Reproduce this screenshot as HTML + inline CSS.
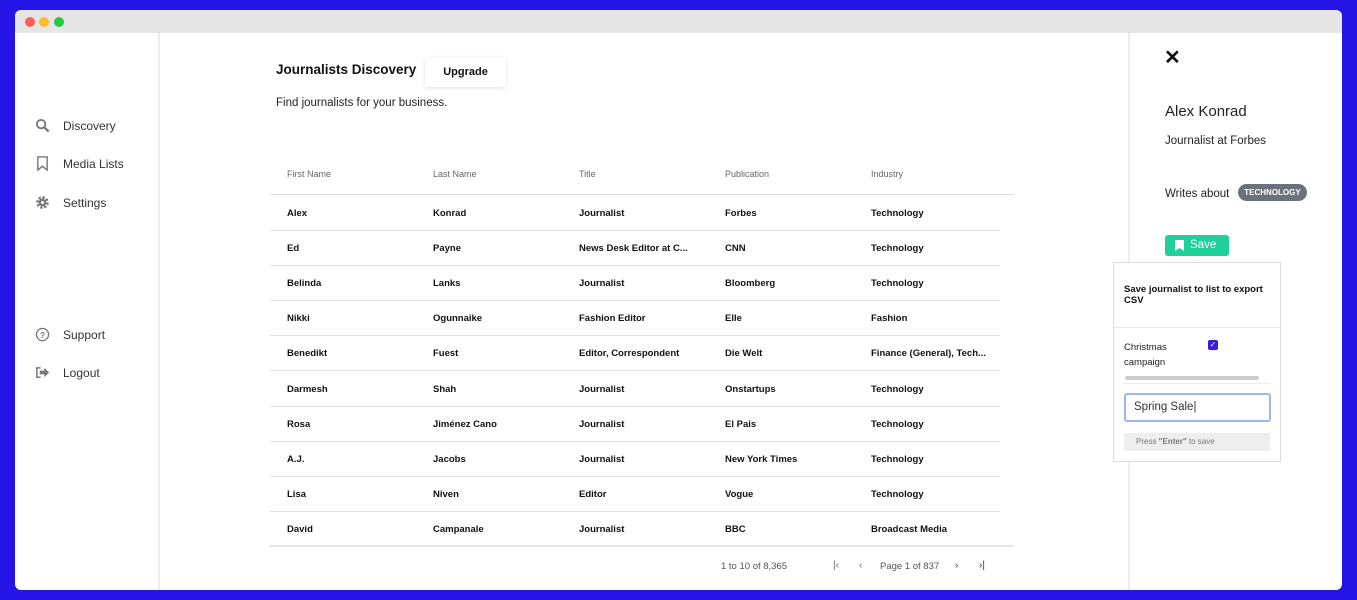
<!DOCTYPE html>
<html><head><meta charset="utf-8"><style>
*{box-sizing:border-box;margin:0;padding:0}
body{width:1357px;height:600px;background:#2414e6;font-family:"Liberation Sans",sans-serif;position:relative;overflow:hidden;color:#111}
.win{position:absolute;left:15px;top:10px;width:1327px;height:580px;background:#fff;border-radius:6px;overflow:hidden}
.bar{height:23px;background:#e6e6e6;position:relative}
.dot{position:absolute;top:7px;width:10px;height:10px;border-radius:50%}
.side{position:absolute;left:0;top:23px;width:145px;bottom:0;border-right:2px solid #eee}
.nav{position:absolute;left:20px;font-size:12px;color:#333;display:flex;align-items:center}
.nav svg{margin-right:13px}
.a{position:absolute}
.th{font-size:9px;color:#666}
.td{font-size:9.5px;font-weight:bold;color:#111}
.ln{position:absolute;left:255px;width:730px;height:1px;background:#e3e3e3}
.rp{position:absolute;left:1113px;top:23px;bottom:0;border-left:2px solid #eee}
</style></head><body>
<div class="win">
<div class="bar"><div class="dot" style="left:10px;background:#fe5f57"></div><div class="dot" style="left:24px;background:#febc2e"></div><div class="dot" style="left:39px;background:#28c840"></div></div>
<div class="side">
<div class="nav" style="top:85px"><svg width="15" height="15" viewBox="0 0 16 16"><circle cx="6.5" cy="6.5" r="4.5" fill="none" stroke="#777" stroke-width="2"/><path d="M10 10l4.5 4.5" stroke="#777" stroke-width="2.4"/></svg>Discovery</div>
<div class="nav" style="top:123px"><svg width="15" height="15" viewBox="0 0 16 16"><path d="M3 1h10v14l-5-4-5 4z" fill="none" stroke="#777" stroke-width="1.5"/></svg>Media Lists</div>
<div class="nav" style="top:162px"><svg width="15" height="15" viewBox="0 0 16 16"><circle cx="8" cy="8" r="5" fill="none" stroke="#777" stroke-width="3.5" stroke-dasharray="2.2 1.7"/><circle cx="8" cy="8" r="4" fill="#777"/><circle cx="8" cy="8" r="1.6" fill="#fff"/></svg>Settings</div>
<div class="nav" style="top:294px"><svg width="15" height="15" viewBox="0 0 16 16"><circle cx="8" cy="8" r="6.5" fill="none" stroke="#777" stroke-width="1.4"/><text x="8" y="11.5" font-size="9" text-anchor="middle" fill="#777" font-family="Liberation Sans" font-weight="bold">?</text></svg>Support</div>
<div class="nav" style="top:332px"><svg width="15" height="15" viewBox="0 0 16 16"><path d="M6 3H2v10h4" fill="none" stroke="#777" stroke-width="1.6"/><path d="M5 6h5V3l5 5-5 5v-3H5z" fill="#777"/></svg>Logout</div>
</div>
<div class="a" style="left:261px;top:52px;font-size:13.5px;font-weight:bold;color:#111">Journalists Discovery</div>
<div class="a" style="left:410px;top:47px;width:81px;height:30px;box-shadow:0 1px 4px rgba(0,0,0,.12);font-size:11px;font-weight:bold;text-align:center;line-height:30px">Upgrade</div>
<div class="a" style="left:261px;top:87px;font-size:11.5px;color:#222">Find journalists for your business.</div>
<div class="ln" style="top:184px;width:744px;height:1px;background:#ddd"></div>
<div class="a th" style="left:272px;top:159px">First Name</div>
<div class="a th" style="left:418px;top:159px">Last Name</div>
<div class="a th" style="left:564px;top:159px">Title</div>
<div class="a th" style="left:710px;top:159px">Publication</div>
<div class="a th" style="left:856px;top:159px">Industry</div>
<div id="rows"></div>
<div class="ln" style="top:535px;width:744px;height:2px;background:#e6e6e6"></div>
<div class="a" style="left:706px;top:551px;font-size:9.5px;color:#555">1 to 10 of 8,365</div>
<div class="a" style="left:818px;top:550px;font-size:10px;color:#666">|&lsaquo;</div>
<div class="a" style="left:844px;top:550px;font-size:10px;color:#666">&lsaquo;</div>
<div class="a" style="left:865px;top:551px;font-size:9.5px;color:#555">Page 1 of 837</div>
<div class="a" style="left:940px;top:550px;font-size:10px;color:#333">&rsaquo;</div>
<div class="a" style="left:964px;top:550px;font-size:10px;color:#333">&rsaquo;|</div>
<div class="rp"></div>
<div class="a" style="left:1149px;top:35px;font-size:20px;font-weight:bold;color:#111">✕</div>
<div class="a" style="left:1150px;top:93px;font-size:15px;color:#222">Alex Konrad</div>
<div class="a" style="left:1150px;top:125px;font-size:11.5px;color:#222">Journalist at Forbes</div>
<div class="a" style="left:1150px;top:178px;font-size:11.5px;color:#222">Writes about</div>
<div class="a" style="left:1223px;top:174px;width:69px;height:17px;border-radius:9px;background:#6c727c;color:#fff;font-size:8px;font-weight:bold;text-align:center;line-height:17px">TECHNOLOGY</div>
<div class="a" style="left:1150px;top:225px;width:64px;height:21px;border-radius:3px;background:#1ed09a;color:#fff;font-size:11.5px;line-height:21px;padding-left:25px">Save<svg style="position:absolute;left:10px;top:5px" width="9" height="11" viewBox="0 0 9 11"><path d="M0 0h9v11L4.5 8 0 11z" fill="#fff"/></svg></div>
<div class="a" style="left:1098px;top:252px;width:168px;height:200px;border:1px solid #ddd;background:#fff">
<div style="position:absolute;left:10px;top:21px;font-size:9.5px;font-weight:bold;line-height:11px;width:150px">Save journalist to list to export CSV</div>
<div style="position:absolute;left:0;right:0;top:64px;height:1px;background:#e6e6e6"></div>
<div style="position:absolute;left:10px;top:77px;font-size:9.5px;line-height:15px;color:#222">Christmas<br>campaign</div>
<div style="position:absolute;left:94px;top:77px;width:10px;height:10px;background:#3b17e8;border-radius:2px;color:#fff;font-size:8px;line-height:10px;text-align:center">✓</div>
<div style="position:absolute;left:11px;top:113px;width:134px;height:4px;border-radius:2px;background:#ccc"></div>
<div style="position:absolute;left:10px;top:120px;width:146px;height:1px;background:#eee"></div>
<div style="position:absolute;left:10px;top:130px;width:147px;height:29px;border:2px solid #9bb5f5;border-radius:3px;font-size:11.5px;line-height:25px;padding-left:8px;color:#333">Spring Sale|</div>
<div style="position:absolute;left:10px;top:170px;width:146px;height:18px;background:#eee;font-size:8px;line-height:18px;padding-left:12px;color:#777">Press <b>"Enter"</b> to save</div>
</div>
</div>
<script>
var d=[["Alex","Konrad","Journalist","Forbes","Technology"],["Ed","Payne","News Desk Editor at C...","CNN","Technology"],["Belinda","Lanks","Journalist","Bloomberg","Technology"],["Nikki","Ogunnaike","Fashion Editor","Elle","Fashion"],["Benedikt","Fuest","Editor, Correspondent","Die Welt","Finance (General), Tech..."],["Darmesh","Shah","Journalist","Onstartups","Technology"],["Rosa","Jiménez Cano","Journalist","El Pais","Technology"],["A.J.","Jacobs","Journalist","New York Times","Technology"],["Lisa","Niven","Editor","Vogue","Technology"],["David","Campanale","Journalist","BBC","Broadcast Media"]];
var h="",x=[272,418,564,710,856];
d.forEach(function(r,i){var y=196+i*35.1;r.forEach(function(c,j){h+='<div class="a td" style="left:'+x[j]+'px;top:'+(y+2)+'px">'+c+'</div>'});if(i<9)h+='<div class="ln" style="top:'+(y+24)+'px"></div>'});
document.getElementById("rows").outerHTML=h;
</script>
</body></html>
